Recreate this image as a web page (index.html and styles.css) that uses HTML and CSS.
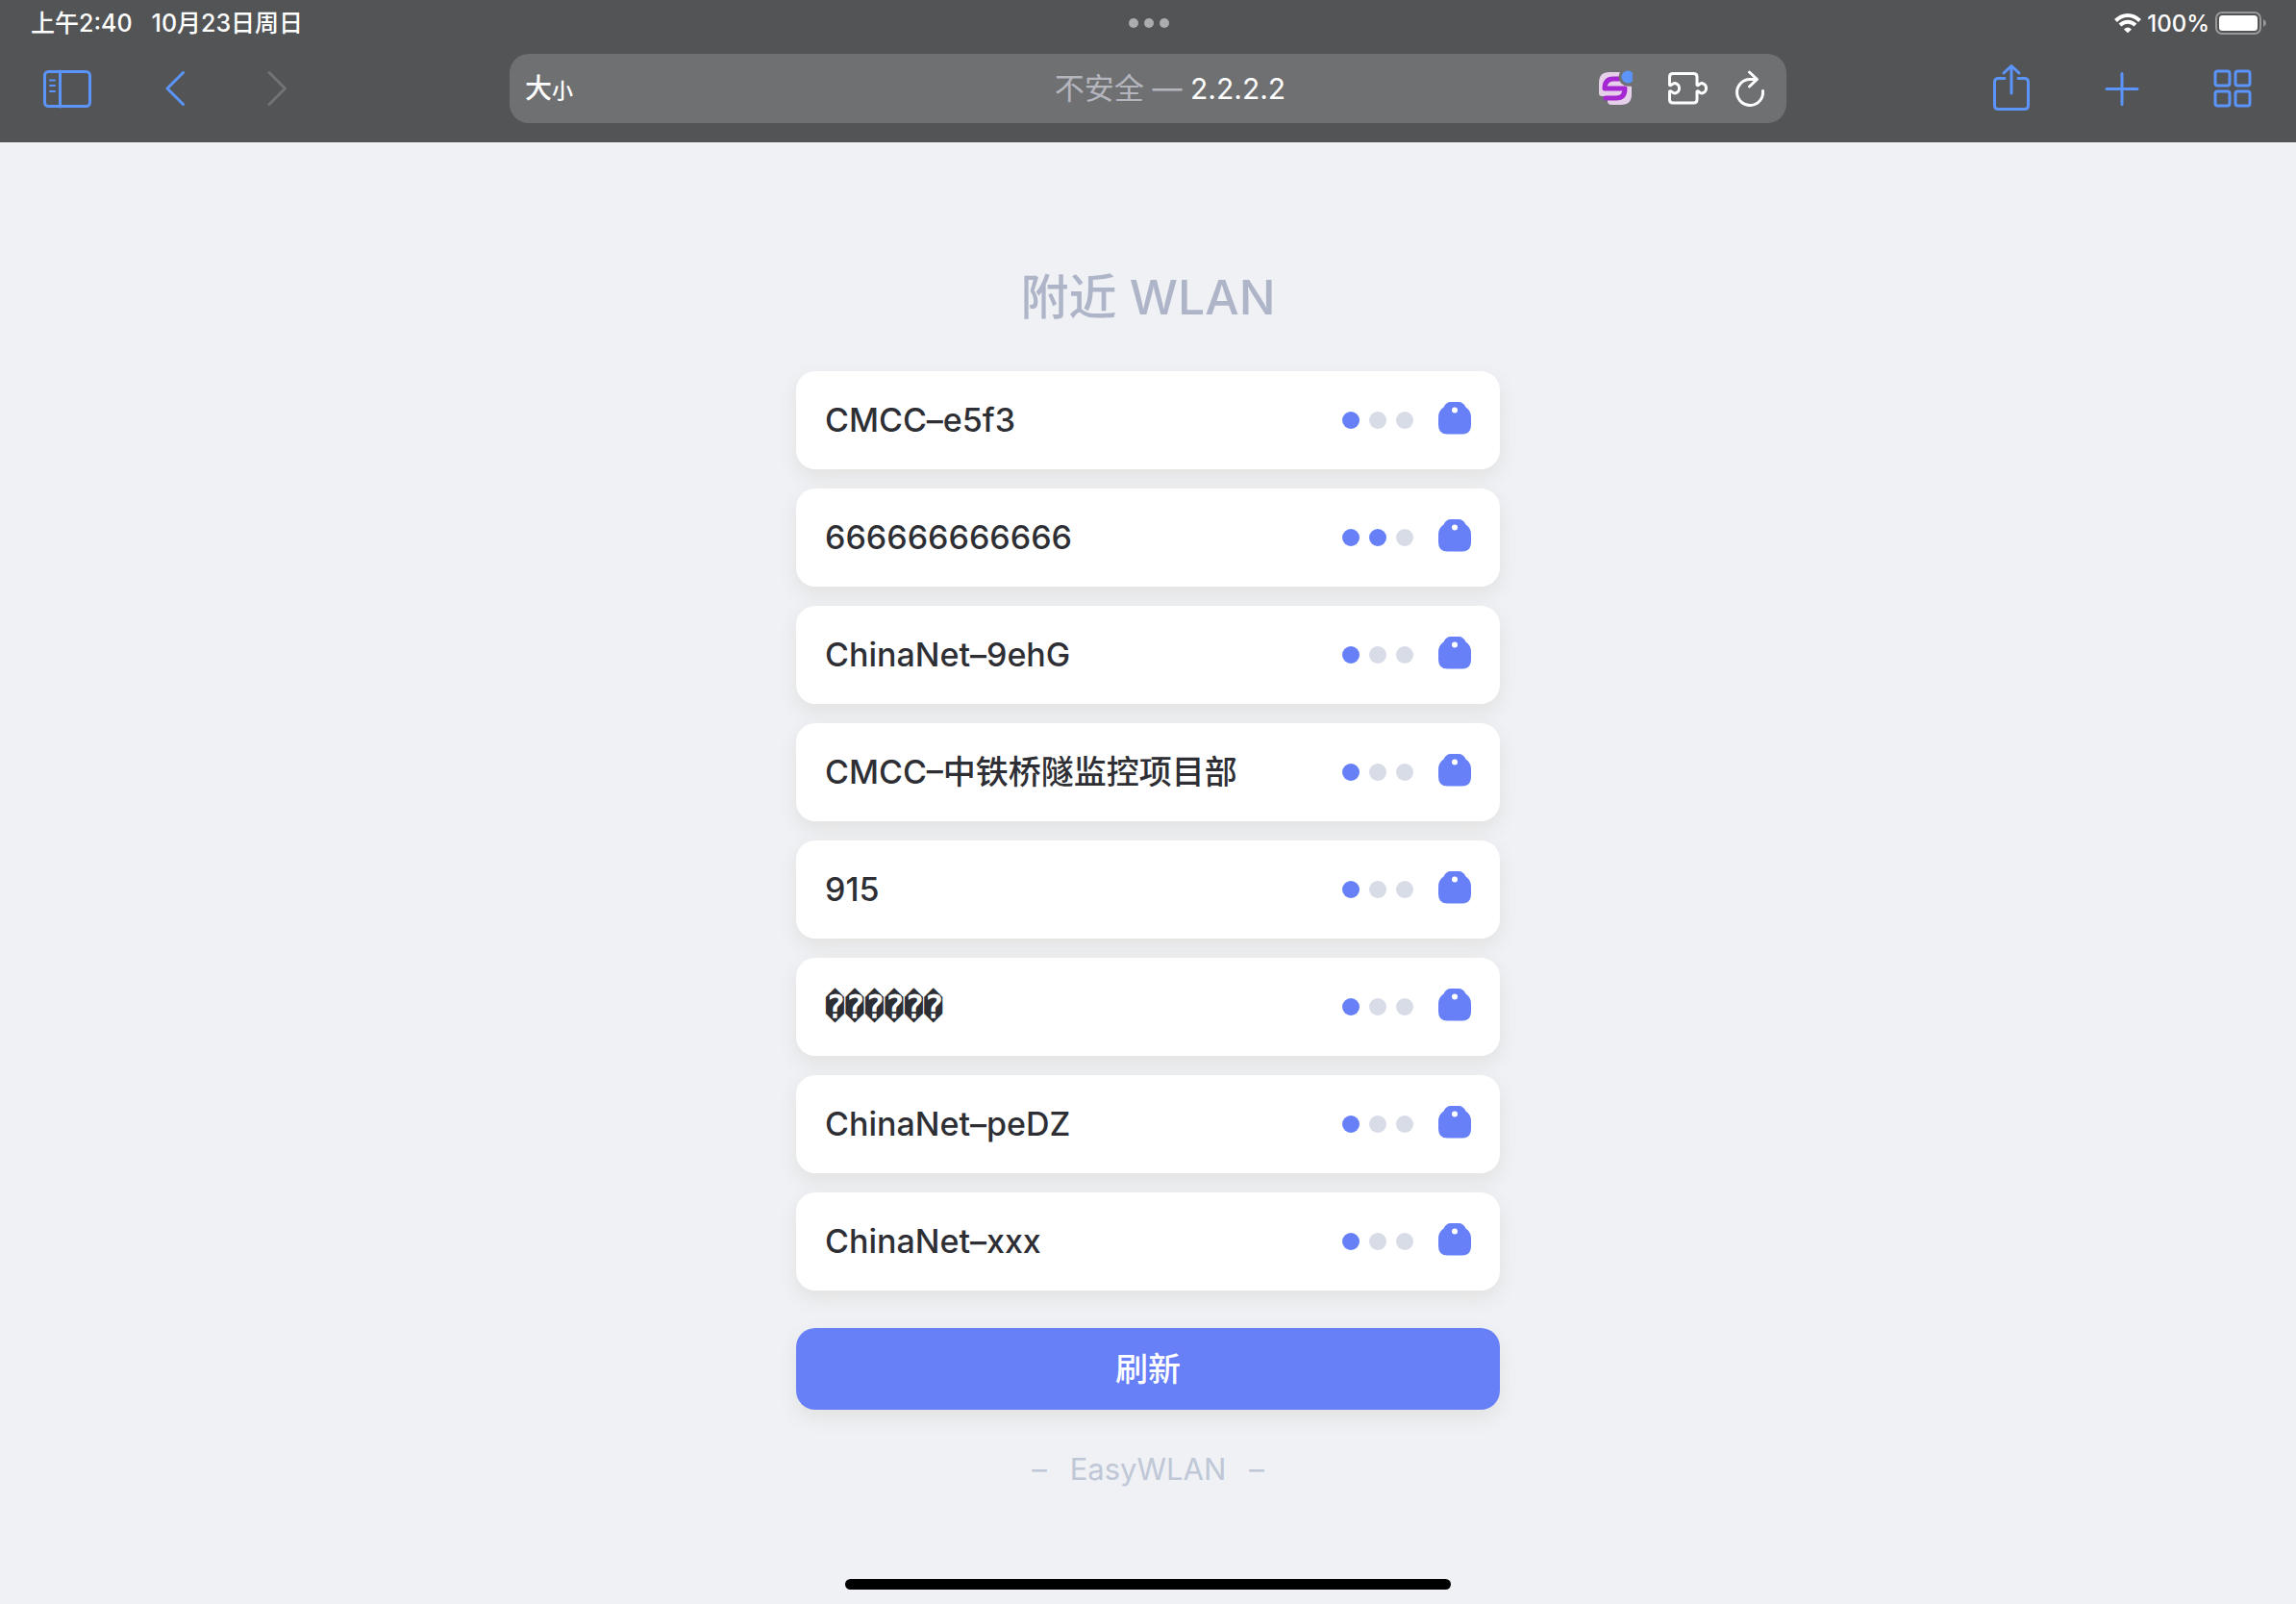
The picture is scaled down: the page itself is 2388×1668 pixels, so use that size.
FILE: index.html
```html
<!DOCTYPE html>
<html lang="zh-CN">
<head>
<meta charset="utf-8">
<meta name="viewport" content="width=device-width, initial-scale=1">
<title>附近 WLAN</title>
<link rel="stylesheet" href="styles.css">
</head>
<body>
<svg class="sprite" aria-hidden="true">
  <symbol id="lock" viewBox="0 0 34 34">
    <path fill="currentColor" d="M13 0H21Q26 0 28.500 5.500Q34 9 34 16V24Q34 33.500 24.500 33.500H9.500Q0 33.500 0 24V16Q0 9 5.500 5.500Q8 0 13 0Z"/>
    <circle cx="17" cy="8.500" r="3" fill="#fff"/>
  </symbol>
</svg>

<header class="browser">
  <div class="status">
    <div class="status-left"><span>上午2:40</span><span>10月23日周日</span></div>
    <div class="multitask"><i></i><i></i><i></i></div>
    <div class="status-right">
      <svg width="28" height="20" viewBox="0 0 28 20" fill="none" stroke="#fff" stroke-width="4"><path d="M1.500 7.500Q7 2 14 2T26.500 7.500"/><path d="M6 12Q9.500 8.700 14 8.700T22 12"/><path d="M10 16.500Q14 12.500 18 16.500L14 20.300Z" fill="#fff" stroke="none"/></svg>
      <span>100%</span>
      <svg width="54" height="24" viewBox="0 0 54 24"><rect x="1" y="1" width="46" height="22" rx="6" fill="none" stroke="#98999a" stroke-width="2"/><rect x="4" y="4" width="40" height="16" rx="3.500" fill="#fff"/><path d="M50 8Q53 9.500 53 12T50 16Z" fill="#98999a"/></svg>
    </div>
  </div>
  <nav class="toolbar" aria-label="浏览器">
    <div class="tools tools-left">
      <button class="tool" aria-label="边栏"><svg width="64" height="64" viewBox="0 0 64 64"><rect x="8.500" y="14.500" width="47" height="36" rx="4"/><path d="M24.500 14v37"/><path class="thin" d="M14 23.500h5M14 29h5M14 35h5"/></svg></button>
      <button class="tool" aria-label="后退"><svg width="64" height="64" viewBox="0 0 64 64"><path d="M43.500 15.500L27 32L43.500 48.500"/></svg></button>
      <button class="tool" aria-label="前进" disabled><svg width="64" height="64" viewBox="0 0 64 64"><path d="M24 15.500L40.500 32L24 48.500"/></svg></button>
    </div>
    <div class="address">
      <button class="textsize" aria-label="大小">大<small>小</small></button>
      <button class="url"><span class="insecure">不安全 —</span> 2.2.2.2</button>
      <div class="extras">
        <button aria-label="扩展"><svg width="36" height="40" viewBox="0 0 36 40"><path fill="#e6d0e9" d="M12 3H24Q22 12 29 17L35 18V26Q35 37 24 37H14Q10 37 10 33V28H4Q1 28 1 25V14Q1 3 12 3Z"/><path d="M22 10H16Q7 10 7 20H28Q28 30 19 30H8" fill="none" stroke="#a527d2" stroke-width="5" stroke-linejoin="round"/><circle cx="31" cy="8" r="9.500" fill="#6f7072"/><circle cx="31" cy="8" r="6.500" fill="#5b94fa"/></svg></button>
        <button aria-label="管理扩展"><svg width="42" height="40" viewBox="0 0 42 40"><path d="M6 4.500H27.500Q31 4.500 31 8V16.500C33 17.500 33 14.500 36 14.500A5.300 5.300 0 0 1 36 25C33 25 33 22 31 23V31.500Q31 35 27.500 35H6Q2.500 35 2.500 31.500V23C4.500 22 5 25 8 25A5.300 5.300 0 0 0 8 14.500C5 14.500 4.500 17.500 2.500 16.500V8Q2.500 4.500 6 4.500Z"/></svg></button>
        <button aria-label="重新载入"><svg width="32" height="40" viewBox="0 0 32 40"><path d="M29.500 22.500A13.500 13.500 0 1 1 16 10.500H22.500"/><path d="M15.500 3L23.500 10.500L15.500 18"/></svg></button>
      </div>
    </div>
    <div class="tools tools-right">
      <button class="tool" aria-label="共享"><svg width="64" height="64" viewBox="0 0 64 64"><path d="M25 21.500H18.500Q14.500 21.500 14.500 25.500V49.500Q14.500 53.500 18.500 53.500H45.500Q49.500 53.500 49.500 49.500V25.500Q49.500 21.500 45.500 21.500H39"/><path d="M32 37V9M24 16L32 8.500L40 16"/></svg></button>
      <button class="tool" aria-label="新标签页"><svg width="64" height="64" viewBox="0 0 64 64"><path d="M32 16.500V48.500M16 32.500H48"/></svg></button>
      <button class="tool" aria-label="标签页概览"><svg width="64" height="64" viewBox="0 0 64 64"><rect x="14" y="14" width="15" height="15" rx="2.500"/><rect x="35" y="14" width="15" height="15" rx="2.500"/><rect x="14" y="35" width="15" height="15" rx="2.500"/><rect x="35" y="35" width="15" height="15" rx="2.500"/></svg></button>
    </div>
  </nav>
</header>

<main class="page">
  <h1>附近 WLAN</h1>
  <ul class="networks">
    <li><button class="network"><span class="ssid">CMCC–e5f3</span><span class="signal"><i class="on"></i><i></i><i></i></span><svg class="lock"><use href="#lock"/></svg></button></li>
    <li><button class="network"><span class="ssid">666666666666</span><span class="signal"><i class="on"></i><i class="on"></i><i></i></span><svg class="lock"><use href="#lock"/></svg></button></li>
    <li><button class="network"><span class="ssid">ChinaNet–9ehG</span><span class="signal"><i class="on"></i><i></i><i></i></span><svg class="lock"><use href="#lock"/></svg></button></li>
    <li><button class="network"><span class="ssid">CMCC–中铁桥隧监控项目部</span><span class="signal"><i class="on"></i><i></i><i></i></span><svg class="lock"><use href="#lock"/></svg></button></li>
    <li><button class="network"><span class="ssid">915</span><span class="signal"><i class="on"></i><i></i><i></i></span><svg class="lock"><use href="#lock"/></svg></button></li>
    <li><button class="network"><span class="ssid garbled">&#xFFFD;&#xFFFD;&#xFFFD;&#xFFFD;&#xFFFD;&#xFFFD;</span><span class="signal"><i class="on"></i><i></i><i></i></span><svg class="lock"><use href="#lock"/></svg></button></li>
    <li><button class="network"><span class="ssid">ChinaNet–peDZ</span><span class="signal"><i class="on"></i><i></i><i></i></span><svg class="lock"><use href="#lock"/></svg></button></li>
    <li><button class="network"><span class="ssid">ChinaNet–xxx</span><span class="signal"><i class="on"></i><i></i><i></i></span><svg class="lock"><use href="#lock"/></svg></button></li>
  </ul>
  <button class="refresh">刷新</button>
  <p class="brand"><span>–</span><span>EasyWLAN</span><span>–</span></p>
</main>
<div class="home-indicator"></div>
</body>
</html>
```
FILE: styles.css
```css
* { box-sizing: border-box; }

body {
  margin: 0;
  min-height: 100vh;
  display: flex;
  flex-direction: column;
  background: #eff1f5;
  color: #2e2f35;
  font-family: Inter, "Noto Sans CJK SC", sans-serif;
}

button {
  margin: 0;
  padding: 0;
  border: 0;
  background: none;
  color: inherit;
  font: inherit;
  cursor: pointer;
}

svg { display: block; }

.sprite { position: absolute; width: 0; height: 0; }

/* Browser chrome */
.browser {
  height: 148px;
  background: #535456;
  color: #fff;
}

.status {
  display: grid;
  grid-template-columns: 1fr auto 1fr;
  align-items: center;
  height: 48px;
  padding: 0 30px 0 32px;
  font-size: 24px;
  font-weight: 500;
}

.status-left { display: flex; gap: 20px; padding-bottom: 4px; font-size: 25px; }
.status-right { display: flex; align-items: center; justify-content: flex-end; gap: 6px; }

.multitask { display: flex; gap: 6px; }
.multitask i { width: 10px; height: 10px; border-radius: 50%; background: #acadae; }

.toolbar {
  display: grid;
  grid-template-columns: 1fr minmax(0, 1328px) 1fr;
  align-items: center;
  padding-top: 8px;
}

.tools { display: flex; align-items: center; }
.tools-left { gap: 45px; padding-left: 38px; }
.tools-right { justify-content: flex-end; gap: 51px; padding-right: 34px; }

.tool svg {
  fill: none;
  stroke: #5b94fa;
  stroke-width: 3;
  stroke-linecap: round;
  stroke-linejoin: round;
}
.tool .thin { stroke-width: 2; }
.tool:disabled svg { stroke: #727375; }

.address {
  display: grid;
  grid-template-columns: 1fr auto 1fr;
  align-items: center;
  height: 72px;
  padding: 0 22px 0 16px;
  border-radius: 20px;
  background: #6f7072;
}

.textsize { justify-self: start; padding-top: 2px; font-size: 28px; font-weight: 500; line-height: 40px; }
.textsize small { font-size: 22px; }

.url { padding-left: 52px; font-size: 30px; line-height: 40px; }
.insecure { color: #b4b5bd; font-size: 31px; }

.extras { display: flex; justify-content: flex-end; gap: 28px; }
.extras svg {
  fill: none;
  stroke: #fff;
  stroke-width: 3;
  stroke-linecap: round;
  stroke-linejoin: round;
}
.extras button:first-child { margin-right: 8px; }
.extras button:first-child svg { stroke: none; }

/* Network list */
.page {
  width: 100%;
  max-width: 732px;
  margin: 0 auto;
  padding-top: 128px;
}

h1 {
  margin: 0 0 44px;
  color: #afb5c8;
  font-size: 50px;
  font-weight: 500;
  line-height: 66px;
  text-align: center;
}

.networks {
  display: flex;
  flex-direction: column;
  gap: 20px;
  margin: 0;
  padding: 0;
  list-style: none;
}

.network {
  display: flex;
  align-items: center;
  width: 100%;
  height: 102px;
  padding: 0 30px;
  border-radius: 20px;
  background: #fff;
  box-shadow: 0 8px 20px rgba(120, 100, 50, 0.1);
  text-align: left;
}

.ssid {
  flex: 1;
  font-size: 34px;
  font-weight: 500;
  line-height: 40px;
}
.garbled { font-family: "DejaVu Sans Mono", monospace; font-weight: 700; }

.signal { display: flex; gap: 10px; margin-right: 26px; }
.signal i { width: 18px; height: 18px; border-radius: 50%; background: #d8dce7; }
.signal .on { background: #6780f8; }

.lock { width: 34px; height: 34px; margin-bottom: 4px; color: #6780f8; }

.refresh {
  width: 100%;
  height: 85px;
  margin-top: 39px;
  padding-bottom: 4px;
  border-radius: 20px;
  background: #6780f8;
  box-shadow: 0 8px 20px rgba(120, 100, 50, 0.1);
  color: #fff;
  font-size: 34px;
  font-weight: 500;
}

.brand {
  display: flex;
  justify-content: center;
  gap: 24px;
  margin: 42px 0 0;
  color: #c0c7d6;
  font-size: 31px;
  line-height: 40px;
}

.home-indicator {
  width: 630px;
  max-width: 80%;
  height: 11px;
  margin: auto auto 15px;
  border-radius: 6px;
  background: #000;
}
```
